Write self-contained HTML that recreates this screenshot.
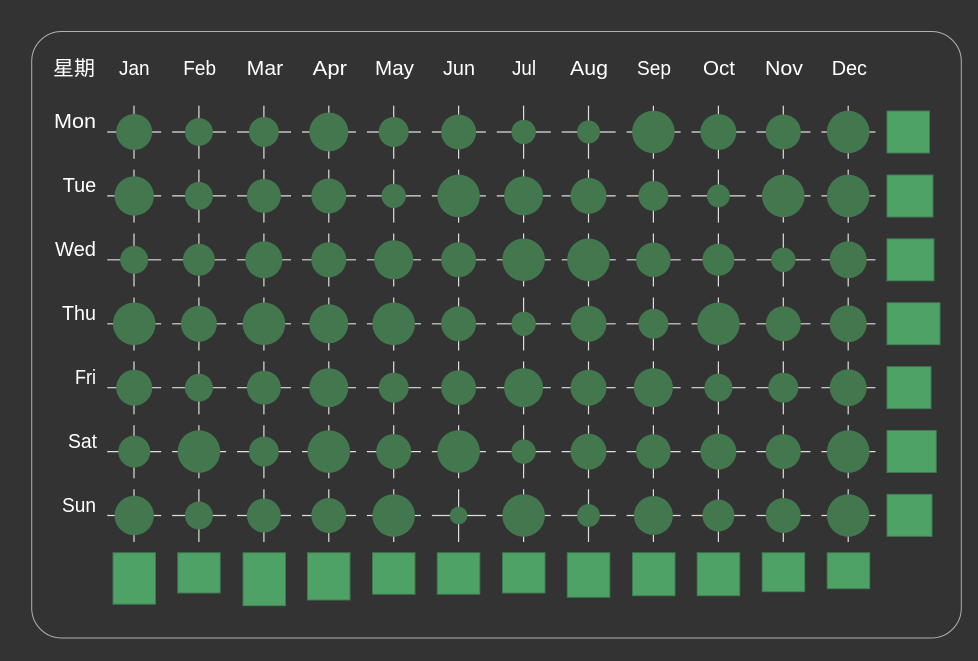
<!DOCTYPE html>
<html lang="en"><head><meta charset="utf-8"><title>Heatmap</title>
<style>
html,body{margin:0;padding:0;background:#333;width:978px;height:661px;overflow:hidden}
svg{display:block}
text{font-family:"Liberation Sans","Noto Sans CJK SC",sans-serif;font-size:20px;fill:#fff}
.l{stroke:#ddd;stroke-width:1.2;fill:none}
.c circle{fill:#43784f}
.r rect{fill:#4fa266;stroke:#3f7a52;stroke-width:1}
</style></head><body>
<svg width="978" height="661" viewBox="0 0 978 661" xmlns="http://www.w3.org/2000/svg">
<rect x="31.7" y="31.5" width="929.6" height="606.5" rx="30" fill="none" stroke="#b0b0b0" stroke-width="1"/>
<g>
<text x="53" y="75" textLength="42" lengthAdjust="spacingAndGlyphs">星期</text>
<text x="119" y="75" textLength="30.5" lengthAdjust="spacingAndGlyphs">Jan</text>
<text x="183.3" y="75" textLength="32.7" lengthAdjust="spacingAndGlyphs">Feb</text>
<text x="246.7" y="75" textLength="36.5" lengthAdjust="spacingAndGlyphs">Mar</text>
<text x="312.7" y="75" textLength="34.3" lengthAdjust="spacingAndGlyphs">Apr</text>
<text x="375" y="75" textLength="39" lengthAdjust="spacingAndGlyphs">May</text>
<text x="443" y="75" textLength="32" lengthAdjust="spacingAndGlyphs">Jun</text>
<text x="512" y="75" textLength="24" lengthAdjust="spacingAndGlyphs">Jul</text>
<text x="570" y="75" textLength="38" lengthAdjust="spacingAndGlyphs">Aug</text>
<text x="637" y="75" textLength="34" lengthAdjust="spacingAndGlyphs">Sep</text>
<text x="703" y="75" textLength="32" lengthAdjust="spacingAndGlyphs">Oct</text>
<text x="765" y="75" textLength="38" lengthAdjust="spacingAndGlyphs">Nov</text>
<text x="831.7" y="75" textLength="35.3" lengthAdjust="spacingAndGlyphs">Dec</text>
<text x="54" y="128" textLength="42" lengthAdjust="spacingAndGlyphs">Mon</text>
<text x="62.7" y="192" textLength="33.5" lengthAdjust="spacingAndGlyphs">Tue</text>
<text x="55" y="256" textLength="41" lengthAdjust="spacingAndGlyphs">Wed</text>
<text x="62" y="320" textLength="34" lengthAdjust="spacingAndGlyphs">Thu</text>
<text x="75" y="384" textLength="21" lengthAdjust="spacingAndGlyphs">Fri</text>
<text x="68" y="448" textLength="29" lengthAdjust="spacingAndGlyphs">Sat</text>
<text x="62" y="512" textLength="34" lengthAdjust="spacingAndGlyphs">Sun</text>
</g>
<g class="l" stroke-dasharray="54 10.93">
<path d="M107.2 132H876"/><path d="M107.2 195.9H876"/><path d="M107.2 259.8H876"/><path d="M107.2 323.8H876"/><path d="M107.2 387.7H876"/><path d="M107.2 451.6H876"/><path d="M107.2 515.5H876"/>
</g>
<g class="l" stroke-dasharray="53 10.92">
<path d="M134 105.7V542"/><path d="M198.9 105.7V542"/><path d="M263.9 105.7V542"/><path d="M328.8 105.7V542"/><path d="M393.7 105.7V542"/><path d="M458.6 105.7V542"/><path d="M523.6 105.7V542"/><path d="M588.5 105.7V542"/><path d="M653.4 105.7V542"/><path d="M718.4 105.7V542"/><path d="M783.3 105.7V542"/><path d="M848.2 105.7V542"/>
</g>
<g class="c">
<circle cx="134.2" cy="132" r="18"/><circle cx="198.9" cy="132" r="14"/><circle cx="263.9" cy="132" r="15"/><circle cx="328.8" cy="132" r="19.5"/><circle cx="393.7" cy="132" r="15"/><circle cx="458.6" cy="132" r="17.5"/><circle cx="523.6" cy="132" r="12.2"/><circle cx="588.5" cy="132" r="11.5"/><circle cx="653.4" cy="132" r="21.3"/><circle cx="718.4" cy="132" r="18"/><circle cx="783.3" cy="132" r="17.5"/><circle cx="848.2" cy="132" r="21.3"/>
<circle cx="134.2" cy="195.9" r="19.7"/><circle cx="198.9" cy="195.9" r="14"/><circle cx="263.9" cy="195.9" r="17"/><circle cx="328.8" cy="195.9" r="17.5"/><circle cx="393.7" cy="195.9" r="12.2"/><circle cx="458.6" cy="195.9" r="21.3"/><circle cx="523.6" cy="195.9" r="19.5"/><circle cx="588.5" cy="195.9" r="18"/><circle cx="653.4" cy="195.9" r="15"/><circle cx="718.4" cy="195.9" r="11.5"/><circle cx="783.3" cy="195.9" r="21.3"/><circle cx="848.2" cy="195.9" r="21.3"/>
<circle cx="134.2" cy="259.8" r="14"/><circle cx="198.9" cy="259.8" r="16"/><circle cx="263.9" cy="259.8" r="18.5"/><circle cx="328.8" cy="259.8" r="17.5"/><circle cx="393.7" cy="259.8" r="19.5"/><circle cx="458.6" cy="259.8" r="17.5"/><circle cx="523.6" cy="259.8" r="21.3"/><circle cx="588.5" cy="259.8" r="21.3"/><circle cx="653.4" cy="259.8" r="17.3"/><circle cx="718.4" cy="259.8" r="16"/><circle cx="783.3" cy="259.8" r="12.2"/><circle cx="848.2" cy="259.8" r="18.5"/>
<circle cx="134.2" cy="323.8" r="21.3"/><circle cx="198.9" cy="323.8" r="18"/><circle cx="263.9" cy="323.8" r="21.3"/><circle cx="328.8" cy="323.8" r="19.5"/><circle cx="393.7" cy="323.8" r="21.3"/><circle cx="458.6" cy="323.8" r="17.5"/><circle cx="523.6" cy="323.8" r="12.2"/><circle cx="588.5" cy="323.8" r="18"/><circle cx="653.4" cy="323.8" r="15"/><circle cx="718.4" cy="323.8" r="21.3"/><circle cx="783.3" cy="323.8" r="17.5"/><circle cx="848.2" cy="323.8" r="18.5"/>
<circle cx="134.2" cy="387.7" r="18"/><circle cx="198.9" cy="387.7" r="14"/><circle cx="263.9" cy="387.7" r="17"/><circle cx="328.8" cy="387.7" r="19.5"/><circle cx="393.7" cy="387.7" r="15"/><circle cx="458.6" cy="387.7" r="17.5"/><circle cx="523.6" cy="387.7" r="19.5"/><circle cx="588.5" cy="387.7" r="18"/><circle cx="653.4" cy="387.7" r="19.5"/><circle cx="718.4" cy="387.7" r="14"/><circle cx="783.3" cy="387.7" r="15"/><circle cx="848.2" cy="387.7" r="18.5"/>
<circle cx="134.2" cy="451.6" r="16"/><circle cx="198.9" cy="451.6" r="21.3"/><circle cx="263.9" cy="451.6" r="15"/><circle cx="328.8" cy="451.6" r="21.3"/><circle cx="393.7" cy="451.6" r="17.5"/><circle cx="458.6" cy="451.6" r="21.3"/><circle cx="523.6" cy="451.6" r="12.2"/><circle cx="588.5" cy="451.6" r="18"/><circle cx="653.4" cy="451.6" r="17.3"/><circle cx="718.4" cy="451.6" r="18"/><circle cx="783.3" cy="451.6" r="17.5"/><circle cx="848.2" cy="451.6" r="21.3"/>
<circle cx="134.2" cy="515.5" r="19.7"/><circle cx="198.9" cy="515.5" r="14"/><circle cx="263.9" cy="515.5" r="17"/><circle cx="328.8" cy="515.5" r="17.5"/><circle cx="393.7" cy="515.5" r="21.3"/><circle cx="458.6" cy="515.5" r="8.8"/><circle cx="523.6" cy="515.5" r="21.3"/><circle cx="588.5" cy="515.5" r="11.5"/><circle cx="653.4" cy="515.5" r="19.5"/><circle cx="718.4" cy="515.5" r="16"/><circle cx="783.3" cy="515.5" r="17.5"/><circle cx="848.2" cy="515.5" r="21.3"/>
</g>
<g class="r">
<rect x="887" y="111" width="42.5" height="42"/>
<rect x="887" y="175" width="46" height="42"/>
<rect x="887" y="238.8" width="47" height="42"/>
<rect x="887" y="302.7" width="53" height="42"/>
<rect x="887" y="366.6" width="44" height="42"/>
<rect x="887" y="430.5" width="49.3" height="42"/>
<rect x="887" y="494.4" width="45" height="42"/>
<rect x="113" y="552.7" width="42.5" height="51.5"/>
<rect x="177.7" y="552.7" width="42.5" height="40.3"/>
<rect x="243" y="552.7" width="42.5" height="53"/>
<rect x="307.5" y="552.7" width="42.5" height="47.3"/>
<rect x="372.5" y="552.7" width="42.5" height="41.6"/>
<rect x="437.3" y="552.7" width="42.5" height="41.6"/>
<rect x="502.5" y="552.7" width="42.5" height="40.3"/>
<rect x="567.3" y="552.7" width="42.5" height="44.6"/>
<rect x="632.5" y="552.7" width="42.5" height="43"/>
<rect x="697.2" y="552.7" width="42.5" height="43"/>
<rect x="762.2" y="552.7" width="42.5" height="39"/>
<rect x="827.2" y="552.7" width="42.5" height="36"/>
</g>
</svg>
</body></html>
